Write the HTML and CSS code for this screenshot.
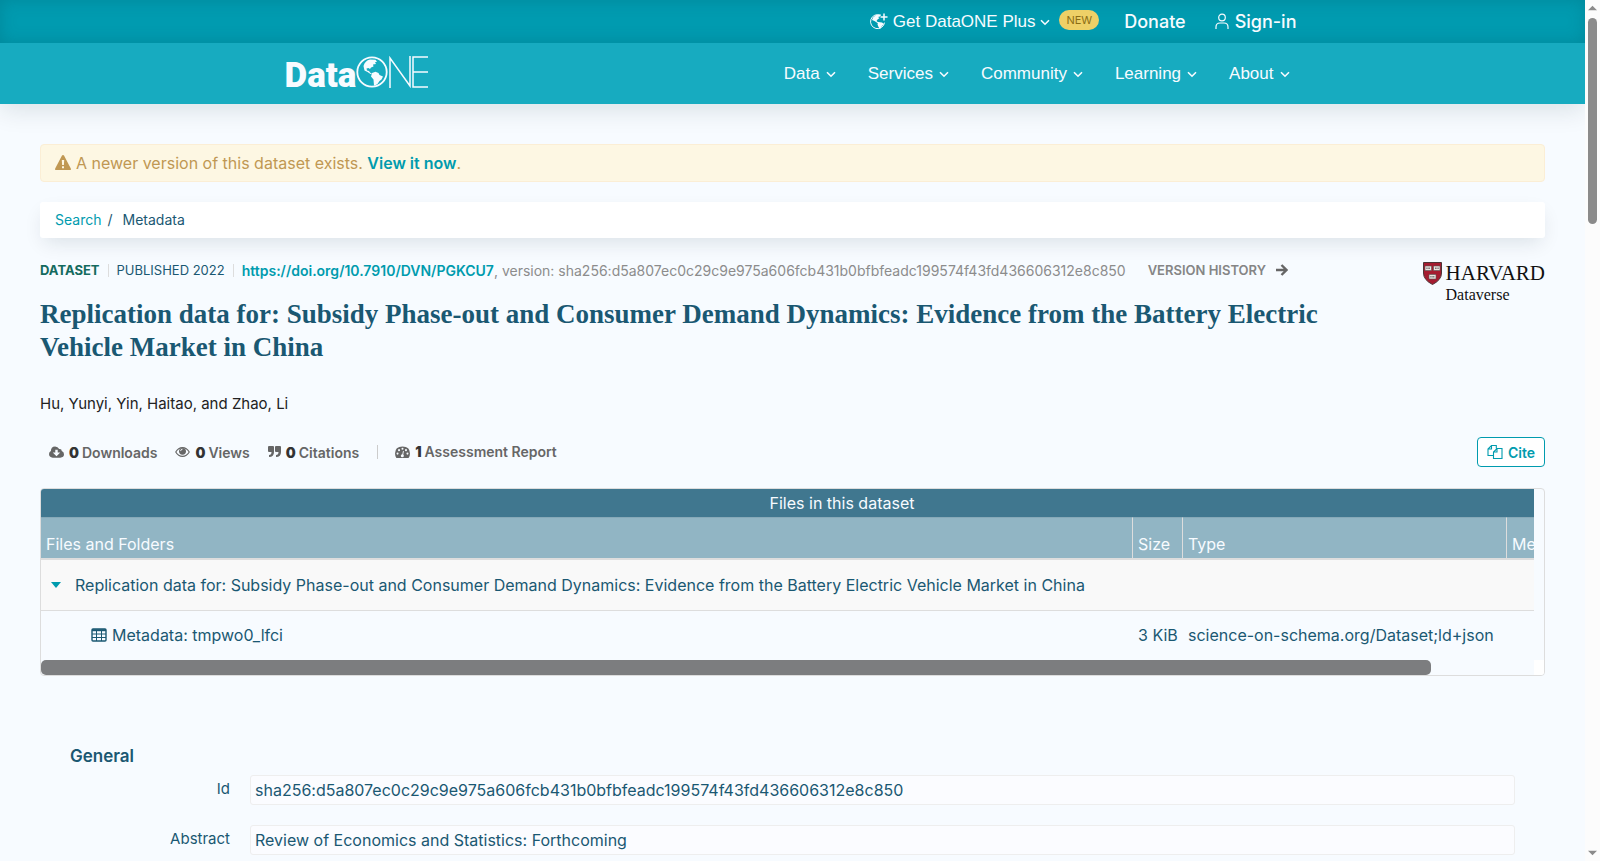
FILE: index.html
```html
<!DOCTYPE html>
<html lang="en">
<head>
    <meta charset="UTF-8">
    <meta name="viewport" content="width=device-width, initial-scale=1.0">
    <title>Replication data for: Subsidy Phase-out and Consumer Demand Dynamics | DataONE</title>
    <link rel="stylesheet" href="styles.css">
</head>
<body>
    <!-- shared icons -->
    <svg class="defs" aria-hidden="true">
        <symbol id="chevron" viewBox="0 0 10 10"><path d="M1 3.200 5 7.200l4-4" fill="none" stroke="currentColor" stroke-width="1.600"/></symbol>
    </svg>

    <div class="page">
        <header class="header">
            <div class="topbar">
                <nav class="topnav">
                    <a href="#" class="plus">
                        <svg class="icon-plus" viewBox="0 0 18 18">
                            <path d="M10.500 2.300A7 7 0 1 0 14.500 9.600" fill="none" stroke="currentColor" stroke-width="1"/>
                            <path d="M3 4.500 6 2l5-.6-1 2-2 .6 1.500 1-2 1.500-1 1.500 2 1.500-1 .5-3-2-2.500-1zM8 9l4 .5 2 1.500-2 2-2 3-1.500-2-1-2.500z" fill="currentColor"/>
                            <path d="M14 .5v7M10.500 4h7" stroke="currentColor" stroke-width="1.500"/>
                        </svg>
                        <span>Get DataONE Plus</span>
                        <svg class="chevron"><use href="#chevron"/></svg>
                        <span class="badge">NEW</span>
                    </a>
                    <a href="#" class="donate">Donate</a>
                    <a href="#" class="signin">
                        <svg class="icon-user" viewBox="0 0 14 17" fill="none" stroke="currentColor" stroke-width="1.200"><circle cx="7" cy="4.500" r="3.300"/><path d="M1 16v-2q0-4 4-4h4q4 0 4 4v2"/></svg>
                        <span>Sign-in</span>
                    </a>
                </nav>
            </div>
            <div class="mainbar">
                <div class="mainbar-inner">
                    <a href="#" class="logo" aria-label="DataONE">
                        <span class="logo-data">Data</span>
                        <svg class="logo-globe" viewBox="0 0 32 32">
                            <circle cx="16" cy="16" r="14.700" fill="none" stroke="currentColor" stroke-width="1.800"/>
                            <path d="M7.500 10Q9 4.500 14 3.500l5.500.3 1.500 2-2 .5 1 1.700-3 .5.5 2-2.500 1-1 1.500-1.500-1-2 .5.5 2 2 .5 1 1.500 2 1.200-1.500.3-3-2-3-1.500z" fill="currentColor"/>
                            <path d="M16 17l3.500-1.200 3 1.200 1 2 3.500 1.500-1.500 3-2 1.500-2 3-2.500 1.500-1 0-.5-6-2.500-3z" fill="currentColor"/>
                        </svg>
                        <svg class="logo-ne" viewBox="0 0 40 32" fill="none" stroke="currentColor" stroke-width="1.500"><path d="M2 32V2l20 28V0M40 1H25v30h15M25 16h15"/></svg>
                    </a>
                    <nav class="mainnav">
                        <a href="#">Data <svg class="chevron"><use href="#chevron"/></svg></a>
                        <a href="#">Services <svg class="chevron"><use href="#chevron"/></svg></a>
                        <a href="#">Community <svg class="chevron"><use href="#chevron"/></svg></a>
                        <a href="#">Learning <svg class="chevron"><use href="#chevron"/></svg></a>
                        <a href="#">About <svg class="chevron"><use href="#chevron"/></svg></a>
                    </nav>
                </div>
            </div>
        </header>

        <main class="content">
            <div class="alert">
                <svg class="icon-warning" viewBox="0 0 16 16"><path fill="currentColor" fill-rule="evenodd" d="M8 0q.7 0 1 .6l6.800 12.800q.6 1.600-1 1.600H1.200q-1.600 0-1-1.600L7 .6Q7.300 0 8 0zM6.800 5l.3 5h1.800l.3-5zM7 11.300v2h2v-2z"/></svg>
                <span>A newer version of this dataset exists. <a href="#">View it now</a>.</span>
            </div>

            <nav class="breadcrumb">
                <a href="#">Search</a><span class="slash">/</span><span>Metadata</span>
            </nav>

            <div class="dataset-head">
                <div class="dataset-title">
                    <div class="meta">
                        <span class="meta-type">DATASET</span>
                        <span class="meta-published">PUBLISHED 2022</span>
                        <span class="meta-id"><a href="#">https://doi.org/10.7910/DVN/PGKCU7</a>, version: sha256:d5a807ec0c29c9e975a606fcb431b0bfbfeadc199574f43fd436606312e8c850</span>
                        <a href="#" class="history">VERSION HISTORY
                            <svg class="icon-arrow" viewBox="0 0 12 12" fill="none" stroke="currentColor" stroke-width="2.400"><path d="M0 6h10M5.500 1l5 5-5 5"/></svg>
                        </a>
                    </div>
                    <h1>Replication data for: Subsidy Phase-out and Consumer Demand Dynamics: Evidence from the Battery Electric Vehicle Market in China</h1>
                </div>
                <a href="#" class="harvard" aria-label="Harvard Dataverse">
                    <svg class="shield" viewBox="0 0 19 23">
                        <path d="M.5.500h18V11q0 7-9 11.500Q.5 18 .5 11z" fill="#a51c30" stroke="#4d3436"/>
                        <path d="M2 4h6.500v4.500H2zM10.500 4H17v4.500h-6.500zM6 12.500h7V17H6z" fill="#eee3e0" stroke="#555" stroke-width=".6"/>
                        <path d="M3.300 6.200h3.700M12 6.200h3.700M7.300 14.700h4.500" stroke="#777" stroke-width="1.500" stroke-dasharray="1 .4"/>
                    </svg>
                    <span class="harvard-name">HARVARD</span>
                    <span class="harvard-sub">Dataverse</span>
                </a>
            </div>

            <p class="authors">Hu, Yunyi, Yin, Haitao, and Zhao, Li</p>

            <div class="toolbar">
                <button type="button" class="metric">
                    <svg class="icon" viewBox="0 0 16 14"><path fill="currentColor" fill-rule="evenodd" d="M4 13q-4-.3-4-3.800 0-2 2-3.200Q2 1 6.500 1q3 0 4.300 2.800Q13.500 3.200 13.600 6 16 7 16 9.500q0 3.500-4 3.500zM6.700 4.500v3H4l4 4 4-4H9.300v-3z"/></svg>
                    <b>0</b>Downloads
                </button>
                <button type="button" class="metric">
                    <svg class="icon" viewBox="0 0 16 14"><path d="M.8 7Q3.500 2.300 8 2.300T15.200 7Q12.500 11.700 8 11.700T.8 7z" fill="none" stroke="currentColor" stroke-width="1.200"/><circle cx="8" cy="6.300" r="3.700" fill="currentColor"/><path d="M6 6q0-2 2-2" fill="none" stroke="#f7fbff"/></svg>
                    <b>0</b>Views
                </button>
                <button type="button" class="metric">
                    <svg class="icon-quote" viewBox="0 0 13 14"><path fill="currentColor" d="M1 1h4q1 0 1 1v5q0 5-5 5V10q2.500 0 2.500-3H1Q0 7 0 6V2q0-1 1-1zM8 1h4q1 0 1 1v5q0 5-5 5V10q2.500 0 2.500-3H8Q7 7 7 6V2q0-1 1-1z"/></svg>
                    <b>0</b>Citations
                </button>
                <button type="button" class="metric metric-report">
                    <svg class="icon" viewBox="0 0 16 14"><path d="M1.500 13.500Q0 11 0 8.500 0 1 8 1t8 7.500q0 2.500-1.500 5z" fill="currentColor"/><g fill="#f7fbff"><circle cx="2.700" cy="8.700" r="1.100"/><circle cx="4.300" cy="5" r="1.100"/><circle cx="8" cy="3.500" r="1.100"/><circle cx="11.700" cy="5" r="1.100"/><circle cx="13.300" cy="8.700" r="1.100"/><circle cx="7.800" cy="11" r="1.600"/></g><path d="M8 11l1-5" stroke="#f7fbff"/></svg>
                    <b>1</b>Assessment Report
                </button>
                <button type="button" class="cite">
                    <svg class="icon-copy" viewBox="0 0 16 16" fill="none" stroke="currentColor" stroke-width="1.100"><path d="M6 11.500H1V5l3.500-3.500h4.800v3M1 5h3.500V1.500M6.500 14.500V8L10 4.500h5v10zM6.500 8H10V4.500"/></svg>
                    Cite
                </button>
            </div>

            <div class="files">
                <div class="files-scroll">
                    <table>
                        <caption>Files in this dataset</caption>
                        <colgroup><col class="col-name"><col class="col-size"><col class="col-type"><col class="col-meta"></colgroup>
                        <thead>
                            <tr><th>Files and Folders</th><th>Size</th><th>Type</th><th>Metadata</th></tr>
                        </thead>
                        <tbody>
                            <tr class="folder">
                                <td><svg class="caret" viewBox="0 0 10 6"><path d="M0 0h10L5 6z" fill="currentColor"/></svg>Replication data for: Subsidy Phase-out and Consumer Demand Dynamics: Evidence from the Battery Electric Vehicle Market in China</td>
                                <td></td><td></td><td></td>
                            </tr>
                            <tr class="file">
                                <td><svg class="icon-table" viewBox="0 0 16 14" fill="none" stroke="currentColor"><rect x="1" y="1" width="14" height="12" rx="1" stroke-width="1.400"/><path d="M1 2.200h14" stroke-width="2"/><path d="M1 6h14M1 9.500h14M5.500 2v11M10.500 2v11"/></svg>Metadata: tmpwo0_lfci</td>
                                <td>3 KiB</td><td>science-on-schema.org/Dataset;ld+json</td><td></td>
                            </tr>
                        </tbody>
                    </table>
                </div>
                <div class="files-bar"><div class="files-thumb"></div><div class="files-corner"></div></div>
            </div>

            <section class="general">
                <h2>General</h2>
                <dl>
                    <dt>Id</dt>
                    <dd>sha256:d5a807ec0c29c9e975a606fcb431b0bfbfeadc199574f43fd436606312e8c850</dd>
                    <dt>Abstract</dt>
                    <dd>Review of Economics and Statistics: Forthcoming</dd>
                </dl>
            </section>
        </main>
    </div>

    <div class="scrollbar" aria-hidden="true">
        <svg viewBox="0 0 10 6"><path d="M0 5.500h10L5 .5z" fill="currentColor"/></svg>
        <div class="scroll-track"><div class="scroll-thumb"></div></div>
        <svg viewBox="0 0 10 6"><path d="M0 .5h10L5 5.500z" fill="currentColor"/></svg>
    </div>
</body>
</html>
```
FILE: styles.css
```css
* {
    box-sizing: border-box;
}
body {
    margin: 0;
    height: 100vh;
    overflow: hidden;
    display: flex;
    background: #f7fbff;
    color: #1a5872;
    font-family: Inter, "Liberation Sans", sans-serif;
    font-size: 16px;
    line-height: 20px;
}
a {
    color: #009bae;
    text-decoration: none;
}
svg {
    flex: none;
}
.defs {
    position: absolute;
    width: 0;
    height: 0;
}
.page {
    flex: 1;
    min-width: 0;
}

/* header */
.header {
    color: #f7fbff;
    box-shadow: 0 6px 24px rgba(0, 40, 50, 0.12);
}
.header a {
    color: inherit;
}
.topbar {
    height: 43px;
    background: #009bb0;
    box-shadow: inset 0 0 16px rgba(0, 80, 90, 0.25);
}
.topnav,
.mainbar-inner {
    max-width: 1016px;
    margin: 0 auto;
    display: flex;
    align-items: center;
}
.topnav {
    height: 43px;
    justify-content: flex-end;
    font-size: 18px;
    font-weight: 500;
}
.topnav a {
    display: flex;
    align-items: center;
}
.plus {
    font-family: "Liberation Sans", Arial, sans-serif;
    font-size: 17px;
    font-weight: 400;
    gap: 5px;
}
.chevron {
    width: 10px;
    height: 10px;
}
.icon-plus {
    width: 18px;
    height: 18px;
}
.badge {
    margin: 0 0 3px 4px;
    padding: 0 7px;
    border-radius: 10px;
    background: #eed067;
    color: #8a6d14;
    font-family: Inter, sans-serif;
    font-size: 11px;
    line-height: 20px;
}
.donate {
    margin-left: 25px;
}
.signin {
    margin-left: 29px;
    margin-right: 4px;
    gap: 6px;
}
.icon-user {
    width: 14px;
    height: 17px;
}
.mainbar {
    background: #17abc0;
}
.mainbar-inner {
    height: 61px;
    justify-content: space-between;
}
.logo {
    display: flex;
    align-items: flex-end;
    height: 32px;
    margin-bottom: 4px;
}
.logo-data {
    font-family: Roboto, sans-serif;
    font-size: 35px;
    font-weight: 900;
    line-height: 24px;
}
.logo-globe {
    width: 32px;
    height: 32px;
}
.logo-ne {
    width: 40px;
    height: 32px;
}
.mainnav {
    display: flex;
    gap: 32px;
    padding-right: 11px;
    font-family: "Liberation Sans", Arial, sans-serif;
    font-size: 17px;
}
.mainnav a {
    display: flex;
    align-items: center;
    gap: 6px;
}

/* dataset */
.content {
    padding: 40px;
}
.alert {
    display: flex;
    align-items: center;
    gap: 5px;
    height: 38px;
    padding: 0 14px;
    border: 1px solid #fbeed5;
    border-radius: 4px;
    background: #fdf7e3;
    color: #c09853;
}
.alert a {
    font-weight: 600;
}
.icon-warning {
    width: 16px;
    height: 16px;
}
.breadcrumb {
    display: flex;
    align-items: center;
    height: 36px;
    margin-top: 20px;
    padding: 0 15px;
    border-radius: 3px;
    background: #fff;
    box-shadow: 0 8px 20px -4px rgba(0, 30, 50, 0.12);
    font-size: 14px;
}
.slash {
    margin: 0 10px 0 6px;
}
.dataset-head {
    display: flex;
    justify-content: space-between;
    margin-top: 22px;
}
.dataset-title {
    width: 1340px;
}
.meta {
    display: flex;
    align-items: center;
    font-size: 13px;
    white-space: nowrap;
}
.meta-type {
    color: #146a5e;
    font-weight: 700;
}
.meta-published,
.meta-id {
    margin-left: 8px;
    padding-left: 8px;
    border-left: 1px solid #ddd;
    line-height: 13px;
}
.meta-id {
    color: #8c8c8c;
    font-size: 14px;
}
.meta-id a {
    font-weight: 600;
}
.history {
    display: flex;
    align-items: center;
    gap: 10px;
    margin-left: 22px;
    color: #858585;
    font-weight: 600;
}
.icon-arrow {
    width: 12px;
    height: 12px;
    color: #666;
}
h1 {
    margin: 18px 0 0;
    font-family: "Liberation Serif", serif;
    font-size: 27px;
    font-weight: 700;
    line-height: 33px;
}
.harvard {
    display: grid;
    grid-template-columns: 19px auto;
    grid-template-rows: 23px 20px;
    column-gap: 4px;
    align-self: flex-start;
    margin-top: 2px;
    color: #111;
    font-family: "Liberation Serif", serif;
    line-height: 23px;
}
.shield {
    width: 19px;
    height: 23px;
}
.harvard-name {
    font-size: 21px;
}
.harvard-sub {
    grid-column: 2;
    font-size: 16px;
    line-height: 20px;
}
.authors {
    margin: 30px 0 0;
    color: #222;
    font-size: 15px;
}
.toolbar {
    display: flex;
    align-items: center;
    height: 30px;
    margin-top: 23px;
}
button {
    display: flex;
    align-items: center;
    padding: 0;
    border: 0;
    background: none;
    font-family: inherit;
    font-size: 14px;
    font-weight: 600;
    cursor: pointer;
}
.metric {
    gap: 3px;
    margin-left: 9px;
    margin-right: 9px;
    color: #666;
}
.metric b {
    margin-left: 2px;
    color: #333;
}
.icon {
    width: 15px;
    height: 14px;
}
.icon-quote {
    width: 13px;
    height: 14px;
}
.metric-report {
    padding-left: 17px;
    border-left: 1px solid #ccc;
    line-height: 14px;
}
.cite {
    gap: 5px;
    height: 30px;
    margin-left: auto;
    padding: 0 9px;
    border: 1px solid #009bae;
    border-radius: 4px;
    background: #fff;
    color: #009bae;
}
.icon-copy {
    width: 16px;
    height: 16px;
}

/* files table */
.files {
    margin-top: 21px;
    border: 1px solid #ddd;
    border-radius: 4px;
    overflow: hidden;
}
.files-scroll {
    margin-right: 10px;
    overflow: hidden;
}
.files table {
    width: 1602px;
    table-layout: fixed;
    border-collapse: separate;
    border-spacing: 0;
    white-space: nowrap;
}
.files caption {
    height: 28px;
    background: #40778f;
    color: #f7fbff;
    line-height: 28px;
}
.col-name {
    width: 1091px;
}
.col-size {
    width: 50px;
}
.col-type {
    width: 324px;
}
.files th {
    height: 43px;
    padding: 12px 5px 0;
    border-top: 1px solid #86a9b8;
    border-left: 1px solid #ddd;
    border-bottom: 2px solid #ddd;
    background: #91b5c4;
    color: #f7fbff;
    font-weight: 400;
    text-align: left;
}
.files th:first-child {
    border-left: 0;
}
.files td {
    height: 50px;
    padding: 0 0 0 6px;
}
.folder td {
    height: 51px;
    border-bottom: 1px solid #ddd;
    background: #f9f9f9;
}
.files .file td {
    height: 49px;
    padding-bottom: 2px;
}
.files td:first-child {
    padding-left: 10px;
}
.files .file td:first-child {
    padding-left: 50px;
}
.caret {
    width: 10px;
    height: 6px;
    margin-right: 14px;
    color: #009bae;
    vertical-align: 3px;
}
.icon-table {
    width: 16px;
    height: 14px;
    margin-right: 5px;
    vertical-align: -1px;
}
.files-bar {
    display: flex;
    justify-content: space-between;
    height: 15px;
}
.files-thumb {
    width: 92.5%;
    border-radius: 5px;
    background: #7c7d7f;
}
.files-corner {
    width: 10px;
    background: #fff;
}

/* general fields */
.general {
    padding: 69px 30px 0;
}
h2 {
    margin: 0;
    font-size: 17px;
    font-weight: 600;
    line-height: 22px;
}
dl {
    display: grid;
    grid-template-columns: 160px 1fr;
    gap: 20px;
    margin: 8px 0 0;
}
dt {
    padding-top: 4px;
    font-size: 15px;
    text-align: right;
}
dd {
    margin: 0;
    padding: 4px;
    border: 1px solid #eee;
    border-radius: 3px;
    background: #fbfcff;
}

/* window scrollbar */
.scrollbar {
    display: flex;
    flex-direction: column;
    align-items: center;
    width: 15px;
    padding: 5px 0;
    background: #fcfcfc;
    color: #8b8b8b;
}
.scrollbar svg {
    width: 9px;
    height: 6px;
}
.scroll-track {
    flex: 1;
    margin: 7px 0;
}
.scroll-thumb {
    width: 9px;
    height: 25%;
    border-radius: 5px;
    background: #8b8b8b;
}
```
